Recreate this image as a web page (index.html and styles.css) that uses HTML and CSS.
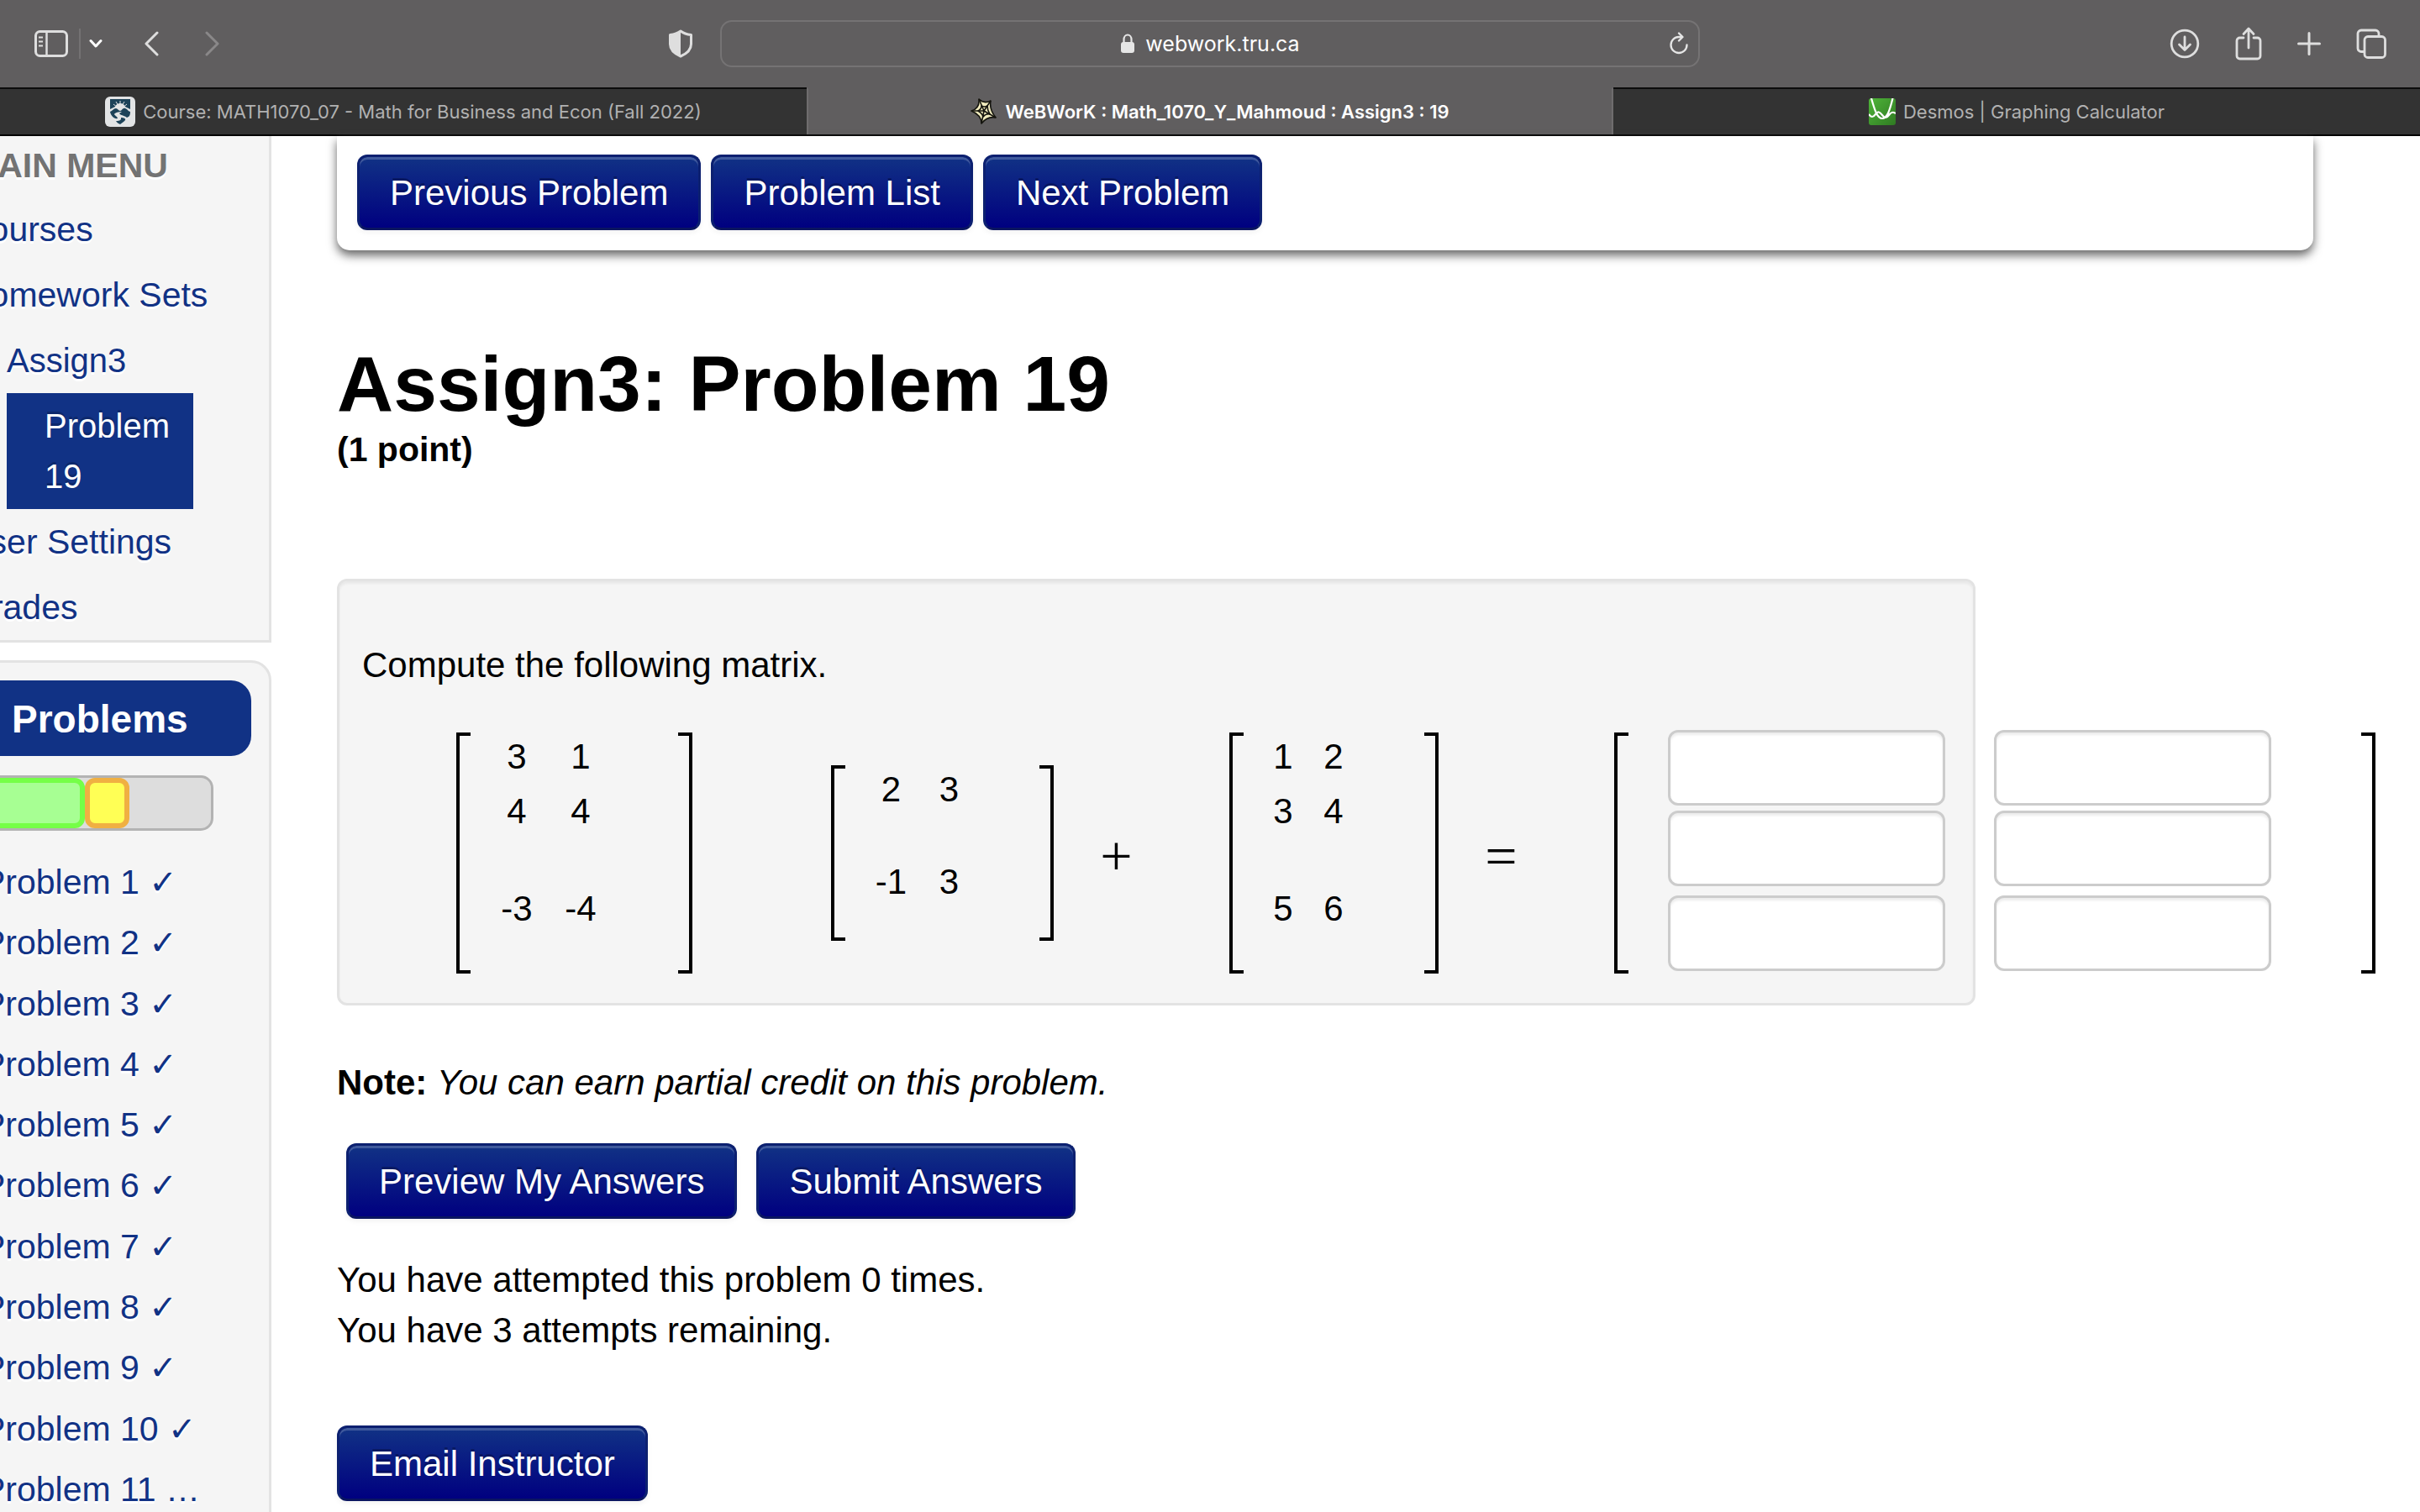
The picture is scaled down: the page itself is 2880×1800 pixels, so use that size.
FILE: index.html
```html
<!DOCTYPE html>
<html lang="en">
<head>
<meta charset="utf-8">
<title>WeBWorK : Math_1070_Y_Mahmoud : Assign3 : 19</title>
<link rel="stylesheet" href="styles.css">
</head>
<body>
<header class="browser">
  <div class="toolbar">
    <div class="tools tools-left">
      <button class="tool" aria-label="Show sidebar"><svg width="40" height="32" viewBox="0 0 40 32" fill="none" stroke="currentColor" stroke-width="3"><rect x="1.5" y="1.5" width="37" height="29" rx="5"/><path d="M14.500 2v28" stroke-width="2.500"/><path d="M5 8.500h5M5 13.500h5M5 18.500h5" stroke-width="2"/></svg></button>
      <span class="tool-divider"></span>
      <button class="tool tool-menu" aria-label="Tab groups"><svg width="16" height="12" viewBox="0 0 16 12" fill="none" stroke="#fff" stroke-width="3" stroke-linecap="round" stroke-linejoin="round"><path d="M2 2.500l6 6.500 6-6.500"/></svg></button>
      <button class="tool tool-back" aria-label="Back"><svg width="18" height="30" viewBox="0 0 18 30" fill="none" stroke="currentColor" stroke-width="3" stroke-linecap="round" stroke-linejoin="round"><path d="M16 2L3 15l13 13"/></svg></button>
      <button class="tool tool-forward" aria-label="Forward"><svg width="18" height="30" viewBox="0 0 18 30" fill="none" stroke="currentColor" stroke-width="3" stroke-linecap="round" stroke-linejoin="round"><path d="M2 2l13 13L2 28"/></svg></button>
      <button class="tool tool-shield" aria-label="Privacy report"><svg width="30" height="34" viewBox="0 0 30 34"><path d="M15 2C11 5 7 6 2.500 6.500v11C2.500 24 8 29 15 32c7-3 12.500-8 12.500-14.500v-11C23 6 19 5 15 2z" fill="none" stroke="currentColor" stroke-width="3" stroke-linejoin="round"/><path d="M15 2C11 5 7 6 2.500 6.500v11C2.500 24 8 29 15 32z" fill="currentColor"/></svg></button>
    </div>
    <div class="address">
      <svg width="18" height="24" viewBox="0 0 18 24"><rect x="1" y="10" width="16" height="13" rx="3" fill="currentColor"/><path d="M4.500 11V7a4.500 5.500 0 0 1 9 0v4" fill="none" stroke="currentColor" stroke-width="2.200"/></svg>
      <span class="host">webwork.tru.ca</span>
      <button class="tool reload" aria-label="Reload"><svg width="24" height="28" viewBox="0 0 24 28" fill="none" stroke="currentColor" stroke-width="2.300" stroke-linecap="round" stroke-linejoin="round"><path d="M21.500 15.500A9.500 9.500 0 1 1 12 6h4M12 1.500L16.500 6 12 10.500"/></svg></button>
    </div>
    <div class="tools tools-right">
      <button class="tool" aria-label="Downloads"><svg width="36" height="36" viewBox="0 0 36 36" fill="none" stroke="currentColor" stroke-width="2.800" stroke-linecap="round" stroke-linejoin="round"><circle cx="18" cy="18" r="15.800"/><path d="M18 10v15M11.500 19l6.500 6.500 6.500-6.500"/></svg></button>
      <button class="tool" aria-label="Share"><svg width="32" height="40" viewBox="0 0 32 40" fill="none" stroke="currentColor" stroke-width="2.800" stroke-linecap="round" stroke-linejoin="round"><path d="M10 13H5.500a3.500 3.500 0 0 0-3.500 3.500v18A3.500 3.500 0 0 0 5.500 38h21a3.500 3.500 0 0 0 3.500-3.500v-18a3.500 3.500 0 0 0-3.500-3.500H22M16 25V2.500M10 8.500l6-6.500 6 6.500"/></svg></button>
      <button class="tool" aria-label="New tab"><svg width="28" height="28" viewBox="0 0 28 28" fill="none" stroke="currentColor" stroke-width="3" stroke-linecap="round"><path d="M14 1.500v25M1.500 14h25"/></svg></button>
      <button class="tool" aria-label="Tab overview"><svg width="36" height="36" viewBox="0 0 36 36" fill="none" stroke="currentColor" stroke-width="2.800" stroke-linejoin="round"><rect x="10" y="9.500" width="24.500" height="25" rx="4"/><path d="M9.500 27.500H6A4 4 0 0 1 2 23.500V6a4 4 0 0 1 4-4h17a4 4 0 0 1 4 4v3"/></svg></button>
    </div>
  </div>
  <nav class="tabs" aria-label="Tabs">
    <a class="tab" href="#course">
      <svg width="36" height="36" viewBox="0 0 36 36"><rect width="36" height="36" rx="6" fill="#e2e4e5"/><path d="M6 3h24v12l-6-3a6.500 6.500 0 0 0-12 0l-6 3z" fill="#1d4359"/><path d="M18 5v4M13 6l2 3.500M23 6l-2 3.500M10 9l3 2.500M26 9l-3 2.500" stroke="#e2e4e5" stroke-width="1"/><path d="M6 18c3-1 4-4 7-4 2 0 3 3 5 3s3-4 6-3 4 4 6 4c0 4-1 6-4 7-3-3-7-2-9-5l3-2c-4 0-8 1-9 3 1 2 4 3 4 5-4 1-8-3-9-8z" fill="#1d4359"/><path d="M19 25c3 0 6 1 5 3s-4 3-6 5c-2-1-4-2-5-4 2 0 7 0 6-4z" fill="#1d4359"/></svg>
      <span>Course: MATH1070_07 - Math for Business and Econ (Fall 2022)</span>
    </a>
    <a class="tab tab-active" href="#webwork" aria-current="page">
      <svg width="32" height="34" viewBox="0 0 32 34" fill="#f0ebbd" stroke="#14140e" stroke-width="1.600" stroke-linejoin="round"><path d="M10 2q6 6 14 2-2 10 6 20-10-2-17 7 0-10-12-15 10-3 9-14z"/><path d="M13 10q4 2 7 0 0 5 3 10-5-1-8 3-1-4-6-7 4-2 4-6z"/><path d="M10 2l6 14 8-12M16 16l14 8M16 16l-3 15M16 16H1" fill="none"/></svg>
      <span>WeBWorK : Math_1070_Y_Mahmoud : Assign3 : 19</span>
    </a>
    <a class="tab" href="#desmos">
      <svg width="32" height="32" viewBox="0 0 32 32"><defs><linearGradient id="leaf" x1="0" y1="0" x2="1" y2="1"><stop offset="0" stop-color="#4fb53a"/><stop offset="1" stop-color="#2f7a22"/></linearGradient></defs><rect width="32" height="32" rx="3" fill="url(#leaf)"/><path d="M3 0c4 14 7 24 13 24S25 14 28.500 0M0 19c3 4 5 4 8 0s5-3 8 1 5 4 8 0 5-4 8-2" fill="none" stroke="#fff" stroke-width="2.200"/></svg>
      <span>Desmos | Graphing Calculator</span>
    </a>
  </nav>
</header>

<div class="page">
  <aside class="sidebar">
    <nav class="main-menu">
      <h2 class="menu-title">MAIN MENU</h2>
      <ul class="menu">
        <li><a href="#courses">Courses</a></li>
        <li><a href="#sets">Homework Sets</a></li>
        <li class="level-2"><a href="#assign3">Assign3</a></li>
        <li class="level-3"><a href="#problem19" aria-current="page">Problem 19</a></li>
        <li><a href="#settings">User Settings</a></li>
        <li><a href="#grades">Grades</a></li>
      </ul>
    </nav>
    <section class="problems">
      <h2 class="problems-title">Problems</h2>
      <div class="progress"><span class="done"></span><span class="started"></span></div>
      <ul class="problem-list">
        <li><a href="#p1">Problem 1 <span class="tick">✓</span></a></li>
        <li><a href="#p2">Problem 2 <span class="tick">✓</span></a></li>
        <li><a href="#p3">Problem 3 <span class="tick">✓</span></a></li>
        <li><a href="#p4">Problem 4 <span class="tick">✓</span></a></li>
        <li><a href="#p5">Problem 5 <span class="tick">✓</span></a></li>
        <li><a href="#p6">Problem 6 <span class="tick">✓</span></a></li>
        <li><a href="#p7">Problem 7 <span class="tick">✓</span></a></li>
        <li><a href="#p8">Problem 8 <span class="tick">✓</span></a></li>
        <li><a href="#p9">Problem 9 <span class="tick">✓</span></a></li>
        <li><a href="#p10">Problem 10 <span class="tick">✓</span></a></li>
        <li><a href="#p11">Problem 11 …</a></li>
      </ul>
    </section>
  </aside>

  <main class="content">
    <nav class="problem-nav">
      <button class="btn">Previous Problem</button>
      <button class="btn">Problem List</button>
      <button class="btn">Next Problem</button>
    </nav>
    <h1 class="title">Assign3: Problem 19</h1>
    <h3 class="points">(1 point)</h3>

    <form class="answer-form">
      <div class="problem">
        <p>Compute the following matrix.</p>
        <div class="expression">
          <div class="matrix">
            <table class="wide-cols tall">
              <tr><td>3</td><td>1</td></tr>
              <tr><td>4</td><td>4</td></tr>
              <tr><td>-3</td><td>-4</td></tr>
            </table>
          </div>
          <div class="matrix factor">
            <table class="mid-cols short">
              <tr><td>2</td><td>3</td></tr>
              <tr><td>-1</td><td>3</td></tr>
            </table>
          </div>
          <span class="operator">+</span>
          <div class="matrix term">
            <table class="narrow-cols tall">
              <tr><td>1</td><td>2</td></tr>
              <tr><td>3</td><td>4</td></tr>
              <tr><td>5</td><td>6</td></tr>
            </table>
          </div>
          <span class="operator">=</span>
          <div class="matrix term">
            <div class="answers">
              <input type="text" aria-label="Row 1 column 1">
              <input type="text" aria-label="Row 1 column 2">
              <input type="text" aria-label="Row 2 column 1">
              <input type="text" aria-label="Row 2 column 2">
              <input type="text" aria-label="Row 3 column 1">
              <input type="text" aria-label="Row 3 column 2">
            </div>
          </div>
        </div>
      </div>
      <p class="note"><b>Note:</b> <i>You can earn partial credit on this problem.</i></p>
      <div class="submit-row">
        <button class="btn" type="button">Preview My Answers</button>
        <button class="btn" type="button">Submit Answers</button>
      </div>
    </form>
    <p class="attempts">You have attempted this problem 0 times.<br>You have 3 attempts remaining.</p>
    <button class="btn">Email Instructor</button>
  </main>
</div>
</body>
</html>
```
FILE: styles.css
```css
*, *::before, *::after { box-sizing: border-box; }

body {
  margin: 0;
  height: 100vh;
  display: flex;
  flex-direction: column;
  overflow: hidden;
  background: #fff;
  color: #000;
  font: 42px/60px "Liberation Sans", Arial, sans-serif;
}

h1, h2, h3, p, ul { margin: 0; padding: 0; }
ul { list-style: none; }
a { text-decoration: none; }

/* Browser chrome */
.browser {
  flex: none;
  background: #605e5f;
  border-bottom: 2px solid #000;
  font-family: Inter, sans-serif;
}

.toolbar {
  height: 104px;
  display: grid;
  grid-template-columns: 1fr 1166px 1fr;
  align-items: center;
}

.tools { display: flex; align-items: center; color: #dedede; }
.tools-left { padding-left: 41px; padding-right: 32px; }
.tools-right { justify-content: flex-end; gap: 42px; padding-right: 40px; }

.tool {
  display: flex;
  padding: 0;
  border: 0;
  background: none;
  color: inherit;
}
.tool-divider { width: 2px; height: 36px; margin: 0 10px 0 13px; background: #747273; }
.tool-back { margin-left: 49px; }
.tool-forward { margin-left: 55px; color: #8a8889; }
.tool-shield { margin-left: auto; }

.address {
  height: 56px;
  display: flex;
  align-items: center;
  justify-content: center;
  gap: 12px;
  position: relative;
  border: 2px solid #757374;
  border-radius: 14px;
  color: #e6e6e6;
}
.host { color: #fff; font-size: 25px; line-height: 32px; }
.reload { position: absolute; right: 11px; }

.tabs { display: grid; grid-template-columns: repeat(3, 1fr); }
.tab {
  height: 56px;
  display: flex;
  align-items: center;
  justify-content: center;
  gap: 9px;
  border-top: 2px solid #0c0c0c;
  background: #333;
  color: #b1b1b1;
  font-size: 22px;
  line-height: 28px;
}
.tab-active {
  border-top-color: #605e5f;
  border-left: 2px solid #6f6d6e;
  border-right: 2px solid #6f6d6e;
  background: #605e5f;
  color: #fff;
  font-weight: 600;
}

/* Page */
.page { flex: 1; min-height: 0; display: flex; align-items: stretch; }

/* The sidebar is scrolled partly past the window's left edge. */
.sidebar {
  flex: none;
  width: 401px;
  margin: 0 78px 0 -78px;
  display: flex;
  flex-direction: column;
  gap: 21px;
  font-size: 41px;
}
.sidebar a { color: #113285; text-shadow: 0 3px 0 #fff; }

.main-menu {
  border: 3px solid #e3e3e3;
  border-top: 0;
  background: #f5f5f5;
}
.menu-title {
  padding: 0 0 2px 38px;
  font-size: 41px;
  line-height: 70px;
  color: #737373;
  text-shadow: 0 3px 0 #fff;
}
.menu a { display: block; padding: 9px 33px; }
.menu .level-2 { margin-left: 50px; font-size: 40px; }
.menu .level-3 { margin: 0 90px 0 83px; font-size: 40px; }
.menu .level-3 a {
  padding: 9px 45px;
  background: #113285;
  color: #fff;
  text-shadow: 0 -3px 0 rgba(0, 0, 0, .2);
}

.problems {
  flex: 1 0 auto;
  padding: 21px;
  border: 3px solid #e3e3e3;
  border-radius: 24px;
  background: #f5f5f5;
}
.problems-title {
  height: 90px;
  padding-left: 68px;
  border-radius: 24px;
  background: #113285;
  color: #fff;
  font-size: 46px;
  line-height: 92px;
}
.progress {
  height: 66px;
  margin: 23px 45px 25px 0;
  display: flex;
  border: 3px solid #b3b3b3;
  border-radius: 15px;
  background: #ddd;
}
.done, .started { border: 6px solid #75ff47; border-radius: 12px; background: #a7ff93; }
.done { width: 152px; }
.started { width: 53px; border-color: #f0b042; background: #ffff55; }

.problem-list {
  min-height: 795px;
  padding-left: 33px;
  display: grid;
  grid-auto-rows: 1fr;
  line-height: 42px;
}
.problem-list li { align-content: center; }
.tick { font: bold 40px/42px "DejaVu Sans", sans-serif; }

.content {
  flex: 1;
  min-width: 0;
  padding-right: 127px;
}

.btn {
  height: 90px;
  padding: 2px 36px 0;
  border: 3px solid #0c2070;
  border-bottom-color: #0a1560;
  border-radius: 12px;
  background: linear-gradient(#113285, #000080);
  box-shadow: inset 0 3px 0 rgba(255, 255, 255, .2), 0 3px 6px rgba(0, 0, 0, .05);
  color: #fff;
  font: 42px/60px "Liberation Sans", Arial, sans-serif;
  text-shadow: 0 -3px 0 rgba(0, 0, 0, .25);
}

.problem-nav {
  display: flex;
  gap: 12px;
  padding: 22px 24px 24px;
  border-radius: 0 0 15px 15px;
  box-shadow: 0 6px 12px #666;
}

.title { margin-top: 105px; font-size: 93px; line-height: 108px; }
.points { font-size: 41px; line-height: 48px; }

.problem {
  width: 82.9%;
  margin-top: 130px;
  padding: 70px 27px 35px;
  border: 3px solid #e3e3e3;
  border-radius: 12px;
  background: #f5f5f5;
  box-shadow: inset 0 3px 3px rgba(0, 0, 0, .05);
}

.expression {
  display: flex;
  align-items: center;
  gap: 58px;
  width: max-content;
  margin-top: 50px;
  padding-left: 112px;
}
.matrix { display: flex; }
.matrix::before, .matrix::after {
  content: "";
  width: 17px;
  border: 4px solid #000;
}
.matrix::before { border-right: 0; }
.matrix::after { border-left: 0; }
.factor { margin-left: 107px; }
.term { margin-left: 60px; }

.matrix table {
  margin: 0 78px 0 17px;
  border-collapse: collapse;
  table-layout: fixed;
  line-height: 58px;
}
.matrix td { padding: 0; text-align: center; vertical-align: top; }
.wide-cols td { width: 76px; }
.mid-cols td { width: 69px; }
.narrow-cols td { width: 60px; }
.tall tr:nth-child(1) { height: 65px; }
.tall tr:nth-child(2) { height: 116px; }
.tall tr:nth-child(3) { height: 106px; }
.short tr:nth-child(1) { height: 110px; }
.short tr:nth-child(2) { height: 99px; }
.matrix .short { margin: 0 73px 0 20px; }

.operator {
  width: 33px;
  padding-top: 6px;
  display: flex;
  justify-content: center;
  font: 68px/60px "Liberation Serif", serif;
}

.answers {
  display: grid;
  grid-template-columns: 330px 330px;
  grid-template-rows: 96px 101px 90px;
  column-gap: 58px;
  margin: -3px 107px 3px 47px;
}
.answers input {
  width: 100%;
  height: 90px;
  border: 3px solid #ccc;
  border-radius: 12px;
  background: #fff;
  box-shadow: inset 0 3px 3px rgba(0, 0, 0, .075);
  padding: 0 18px;
  font: inherit;
}

.note { margin-top: 62px; }
.submit-row { display: flex; gap: 23px; margin: 42px 0 43px 11px; }
.attempts { margin-bottom: 83px; }
```
